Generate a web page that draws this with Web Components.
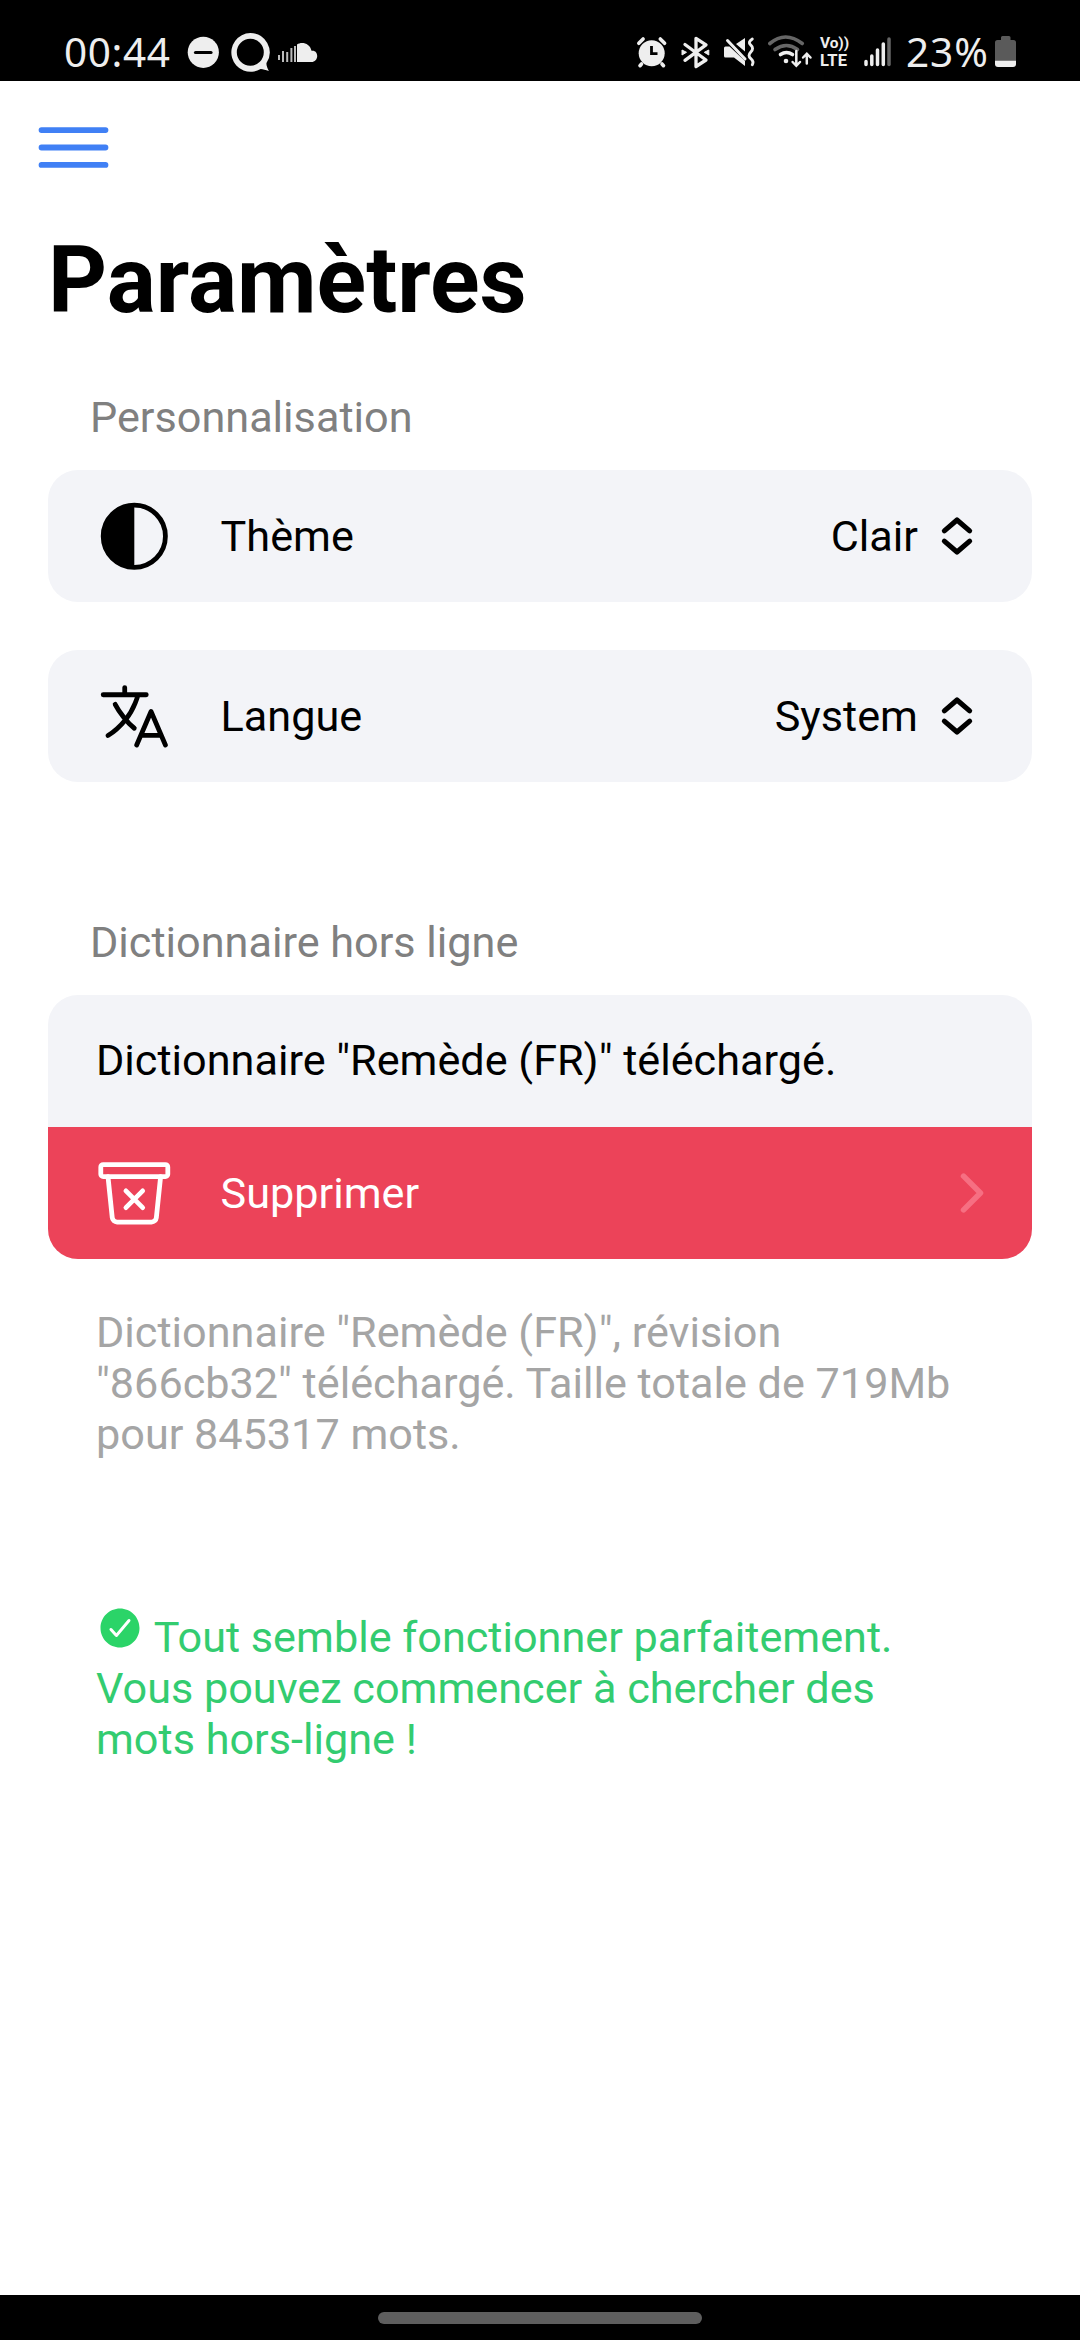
<!DOCTYPE html>
<html lang="fr">
<head>
<meta charset="utf-8">
<title>Paramètres</title>
<style>
html,body{margin:0;padding:0;background:#fff}
body{width:1080px;height:2340px;overflow:hidden;font-family:Roboto,"Liberation Sans",sans-serif;font-size:43.2px;line-height:51px;color:#000}
</style>
</head>
<body>
<settings-app></settings-app>
<script>
function define(name, html){
  const t = document.createElement('template');
  t.innerHTML = html;
  customElements.define(name, class extends HTMLElement{
    constructor(){
      super();
      this.attachShadow({mode:'open'}).appendChild(t.content.cloneNode(true));
    }
  });
}

/* Line icons on a 512 grid */
const ICONS = {
  menu:'<path stroke-width="32" stroke-miterlimit="10" d="M80 160h352M80 256h352M80 352h352"/>',
  contrast:'<circle cx="256" cy="256" r="208" stroke-width="32"/><path fill="currentColor" stroke="none" d="M256 464C141.1 464 48 370.9 48 256S141.1 48 256 48z"/>',
  language:'<path stroke-width="32" d="M48 112h288M192 64v48M272 448l96-224 96 224M301.5 384h133M281.3 112S257 206 199 277 80 384 80 384M256 336s-35-27-72-75-56-85-56-85"/>',
  trash:'<path stroke-width="32" d="M432 144l-28.67 275.74A32 32 0 01371.55 448H140.46a32 32 0 01-31.78-28.26L80 144"/><rect x="32" y="64" width="448" height="80" rx="16" stroke-width="32"/><path stroke-width="32" d="M312 240L200 352M312 352L200 240"/>',
  expand:'<path stroke-width="48" d="M136 208l120-104 120 104M136 304l120 104 120-104"/>',
  forward:'<path stroke-width="48" d="M184 112l144 144-144 144"/>',
  check:'<path fill="currentColor" stroke="none" d="M256 48C141.31 48 48 141.31 48 256s93.31 208 208 208 208-93.31 208-208S370.69 48 256 48zm108.25 138.29l-134.4 160a16 16 0 01-12 5.71h-.27a16 16 0 01-11.89-5.3l-57.6-64a16 16 0 1123.78-21.4l45.29 50.32 122.59-145.91a16 16 0 0124.5 20.58z"/>'
};
customElements.define('app-icon', class extends HTMLElement{
  constructor(){
    super();
    this.attachShadow({mode:'open'}).innerHTML =
      '<style>:host{display:inline-block;flex:none;width:var(--size,76.6px);height:var(--size,76.6px)}svg{display:block;width:100%;height:100%}</style>'+
      '<svg viewBox="0 0 512 512" fill="none" stroke="currentColor" stroke-linecap="round" stroke-linejoin="round">'+ICONS[this.getAttribute('name')]+'</svg>';
  }
});

define('status-bar', `
<style>
:host{display:flex;justify-content:space-between;height:81px;background:#000;color:#eee;box-sizing:border-box;padding:0 62px 0 64px;font-family:"Noto Sans",sans-serif}
.g{display:flex;height:81px}
svg{display:block;height:81px;flex:none}
.t{font-size:40.5px;line-height:56px;padding-top:24px;white-space:nowrap}
.clock{width:122px;letter-spacing:.6px}
.pct{width:88px;letter-spacing:.9px}
.volte{width:36px;padding-top:35px;font:700 16.5px/18px Roboto,sans-serif;display:flex;flex-direction:column;box-sizing:border-box}
.volte span{display:block;white-space:nowrap}
.volte .a{font-size:15.5px;height:17px;line-height:17px;letter-spacing:-.1px}
.volte .b{letter-spacing:.2px}
</style>
<div class="g">
  <div class="t clock">00:44</div>
  <svg width="42" viewBox="186 0 42 81"><circle cx="203.3" cy="52.3" r="15.6" fill="#eee"/><path d="M195.5 52.5h15.5" stroke="#000" stroke-width="3.2" stroke-linecap="round"/></svg>
  <svg width="48" viewBox="228 0 48 81"><path fill="#eee" fill-rule="evenodd" d="M250.300 33a19.400 19.400 0 0 1 16.300 29.800c-.6 1.200.4 4.800 2.300 8.100c-3.500-.4-6.300-2-8.300-1.800A19.400 19.400 0 1 1 250.300 33zm0 5.800a13.500 13.500 0 1 0 0 27a13.500 13.500 0 0 0 0-27z"/></svg>
  <svg width="44" viewBox="276 0 44 81"><path d="M279 55v5M283 51v11M287.200 52v10M291.400 48v14M295 46v16" stroke="#bbb" stroke-width="2"/><path fill="#eee" d="M297 44.500c4.500-3.200 13-1.500 14.500 6.300 3.200-.8 5.700 1.600 5.700 5.200 0 3.400-2.500 6-5.700 6H297z"/></svg>
</div>
<div class="g">
  <svg width="40" viewBox="632 0 40 81"><circle cx="651.700" cy="53.300" r="13" fill="#eee"/><path d="M638.800 43.300l4.300-4.300M664.600 43.300l-4.300-4.300M641.500 64l-1.500 1.700M662 64l1.500 1.700" stroke="#eee" stroke-width="3.600" stroke-linecap="round"/><path d="M651.500 46v7.700h6" fill="none" stroke="#000" stroke-width="2.800"/></svg>
  <svg width="44" viewBox="674 0 44 81" style="margin-left:2px"><path d="M685 44.500l21 15.500-10 6.500V38.300l10 6.500-21 15.500" fill="none" stroke="#eee" stroke-width="3.300" stroke-linejoin="round" stroke-linecap="round"/><path d="M682 50l4.500 2.300-4.500 2.700zM708.800 50l-4.500 2.300 4.500 2.700z" fill="#eee" stroke="#eee" stroke-linejoin="round"/></svg>
  <svg width="46" viewBox="718 0 46 81"><path fill="#eee" d="M725.500 46.500h4l15.500 14.500v5l-11-8.500h-8.500q-1.500 0-1.500-1.500v-8q0-1.500 1.500-1.500zM745 38v13.500l-9-7.500z"/><path d="M727.500 40.500L745 59" stroke="#eee" stroke-width="3" stroke-linecap="round"/><path d="M752.300 39q-5 3.200-1.500 6.200t0 6.700 0 6.700 1.500 6.200" fill="none" stroke="#eee" stroke-width="2.900" stroke-linecap="round"/></svg>
  <svg width="54" viewBox="764 0 54 81"><g fill="none" stroke-linecap="round" stroke-width="3.600"><path d="M769.800 43.500q15.500-13 32.500 0M775 49.500q11.500-8 22.500 0" stroke="#666"/><path d="M780.500 54.500q6-4 12 0" stroke="#eee"/><path d="M796.300 51v14.500M792.600 62l3.700 3.800 3.700-3.800M806.800 63.500V54M803.100 57.500l3.700-3.800 3.700 3.800" stroke="#eee" stroke-width="2.500"/></g><circle cx="786" cy="61" r="2.300" fill="#eee"/></svg>
  <div class="volte" style="margin-left:2px"><span class="a">Vo))</span><span class="b">LTE</span></div>
  <svg width="40" viewBox="856 0 40 81"><g stroke="#eee" stroke-width="3.500" stroke-linecap="round"><path d="M866 61.500v3M871.800 56v8.500M877.500 50v14.500M883.300 44v20.500"/><path d="M889 39v25.500" stroke="#666"/></g></svg>
  <div class="t pct" style="margin-left:10px">23%</div>
  <svg width="24" viewBox="994 0 24 81"><path fill="#5a5a5a" d="M1001 37.500q0-1.500 1.500-1.500h6.500q1.500 0 1.500 1.500V40h3q2.500 0 2.500 2.500V61H995V42.500q0-2.500 2.500-2.500h3.500z"/><path fill="#eee" d="M995 60.700h21v3.300q0 3-3 3h-15q-3 0-3-3z"/></svg>
</div>`);

define('setting-card', `
<style>
:host{display:block;background:#f3f4f8;border-radius:30px;overflow:hidden;margin:0 48px}
</style><slot></slot>`);

define('setting-row', `
<style>
:host{display:flex;align-items:center;height:132px;box-sizing:border-box;padding:0 48px;white-space:nowrap}
:host([plain]){padding-bottom:2px}
:host([danger]){background:#ec4359;color:#fff;padding-right:30px}
::slotted([slot=icon]){margin-right:48px}
.end{margin-left:auto;display:flex;align-items:center;gap:12px}
</style>
<slot name="icon"></slot><span><slot></slot></span><div class="end"><slot name="end"></slot></div>`);

define('section-label', `
<style>:host{display:block;height:51px;padding-left:90px;margin-bottom:27px;color:#808080}</style><slot></slot>`);

define('nav-bar', `
<style>:host{display:flex;justify-content:center;align-items:center;height:45px;padding-top:1px;box-sizing:border-box;background:#000}i{width:324px;height:12px;border-radius:6px;background:#5e5e5e}</style><i></i>`);

define('settings-app', `
<style>
:host{display:flex;flex-direction:column;height:2340px}
main{flex:1;display:block;padding-top:20px;box-sizing:border-box}
.menu{display:block;--size:93px;margin-left:27px;color:#4080f5}
h1{margin:33px 48px 57px;font-size:91.8px;line-height:108px;font-weight:700;height:108px}
.second{margin-top:48px}
.third{margin-top:135px}
p{margin:0 0 0 96px;white-space:nowrap}
.info{margin-top:48px;color:#a5a5a5}
.ok{margin-top:144px;color:#33cc70}
.ok app-icon{--size:48px;color:#2bd468;vertical-align:baseline}
</style>
<status-bar></status-bar>
<main>
  <app-icon class="menu" name="menu"></app-icon>
  <h1>Paramètres</h1>
  <section-label>Personnalisation</section-label>
  <setting-card>
    <setting-row><app-icon slot="icon" name="contrast"></app-icon>Thème<span slot="end">Clair</span><app-icon slot="end" name="expand" style="--size:54px"></app-icon></setting-row>
  </setting-card>
  <setting-card class="second">
    <setting-row><app-icon slot="icon" name="language"></app-icon>Langue<span slot="end">System</span><app-icon slot="end" name="expand" style="--size:54px"></app-icon></setting-row>
  </setting-card>
  <section-label class="third">Dictionnaire hors ligne</section-label>
  <setting-card>
    <setting-row plain>Dictionnaire "Remède (FR)" téléchargé.</setting-row>
    <setting-row danger><app-icon slot="icon" name="trash"></app-icon>Supprimer<app-icon slot="end" name="forward" style="--size:60px;color:#f66f82"></app-icon></setting-row>
  </setting-card>
  <p class="info">Dictionnaire "Remède (FR)", révision<br>"866cb32" téléchargé. Taille totale de 719Mb<br>pour 845317 mots.</p>
  <p class="ok"><app-icon name="check"></app-icon> Tout semble fonctionner parfaitement.<br>Vous pouvez commencer à chercher des<br>mots hors-ligne !</p>
</main>
<nav-bar></nav-bar>`);
</script>
</body>
</html>
